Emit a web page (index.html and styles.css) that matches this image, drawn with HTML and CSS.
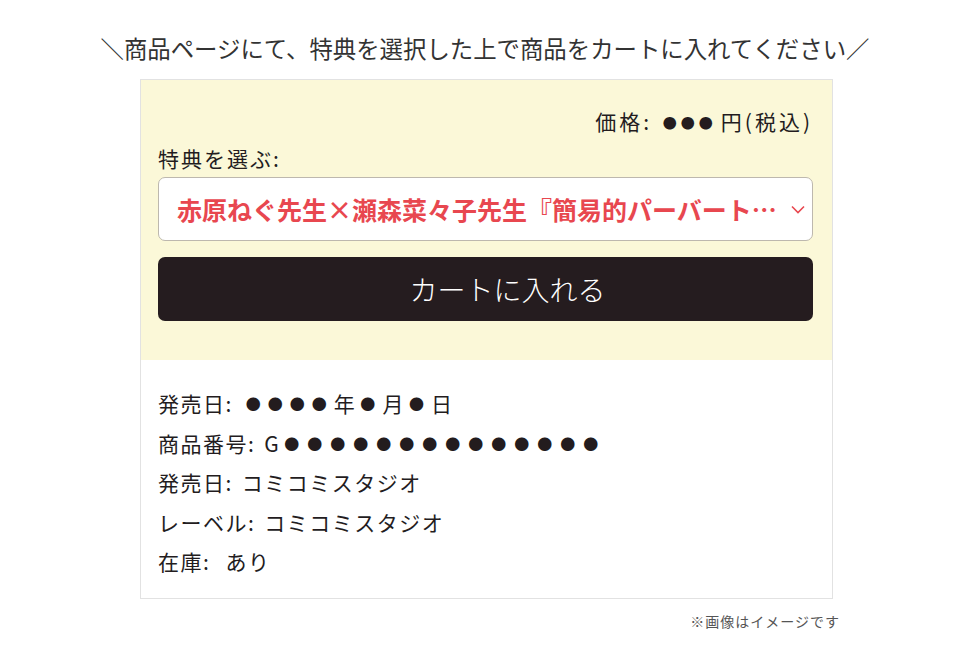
FILE: index.html
```html
<!DOCTYPE html>
<html lang="ja">
<head>
    <meta charset="UTF-8">
    <meta name="viewport" content="width=device-width, initial-scale=1.0">
    <title>カートに入れる</title>
    <link rel="stylesheet" href="styles.css">
</head>
<body>

<div class="page">
    <h2 class="lead">＼商品ページにて、特典を選択した上で商品をカートに入れてください／</h2>

    <div class="card">
        <!-- 購入エリア -->
        <div class="buy-box">
            <p class="price">価格: <span class="dots dots-small">●●●</span>円(税込)</p>
            <p class="label">特典を選ぶ:</p>
            <div class="select">
                <span class="select-text">赤原ねぐ先生×瀬森菜々子先生『簡易的パーバート…</span>
                <svg class="chevron" width="14" height="9" viewBox="0 0 14 9">
                    <path d="M1 1.5 L7 7.5 L13 1.5" fill="none" stroke="#e8474f" stroke-width="1.6"/>
                </svg>
            </div>
            <button class="cart-button">カートに入れる</button>
        </div>

        <!-- 商品情報 -->
        <ul class="info">
            <li><span class="key">発売日:</span><span class="dots">●●●●</span>年<span class="dots">●</span>月<span class="dots">●</span>日</li>
            <li><span class="key">商品番号:</span>G<span class="dots dots-wide">●●●●●●●●●●●●●●</span></li>
            <li><span class="key">発売日:</span>コミコミスタジオ</li>
            <li><span class="key">レーベル:</span>コミコミスタジオ</li>
            <li><span class="key">在庫:</span>&nbsp;あり</li>
        </ul>
    </div>

    <p class="note">※画像はイメージです</p>
</div>

</body>
</html>
```

FILE: styles.css
```css
body {
    margin: 0;
    background-color: #fff;
    font-family: "Noto Sans CJK JP", "Noto Sans", sans-serif;
    color: #231c1e;
}
.page {
    width: 970px;
    padding-top: 31px;
}
.lead {
    margin: 0 0 14px;
    font-size: 23.4px;
    font-weight: normal;
    line-height: 34px;
    text-align: center;
    color: #333;
}
.card {
    width: 691px;
    margin-left: 140px;
    border: 1px solid #e2e2e2;
    background-color: #fff;
}
.buy-box {
    background-color: #fbf8d8;
    padding: 26px 19px 39px 17px;
}
.price {
    margin: 0;
    font-size: 21px;
    letter-spacing: 3px;
    line-height: 30px;
    text-align: right;
}
.label {
    margin: 6px 0 4px;
    font-size: 21px;
    letter-spacing: 2px;
    line-height: 30px;
}
/* ●は小さめにして左右に間隔をとる */
.dots {
    font-size: 15px;
    letter-spacing: 7px;
    padding-left: 4px;
    vertical-align: 2px;
}
.dots-wide {
    letter-spacing: 8px;
}
.dots-small {
    font-size: 14px;
    letter-spacing: 4px;
    padding-left: 3px;
    margin-right: 4px;
}
.select {
    display: flex;
    align-items: center;
    justify-content: space-between;
    height: 62px;
    padding: 0 7px 0 18px;
    background-color: #fff;
    border: 1px solid #bdb8ae;
    border-radius: 7px;
}
.select-text {
    font-size: 25px;
    font-weight: bold;
    color: #e8474f;
    white-space: nowrap;
    overflow: hidden;
}
.chevron {
    flex-shrink: 0;
}
.cart-button {
    display: block;
    width: 100%;
    height: 64px;
    margin-top: 16px;
    padding-left: 50px;
    border: none;
    border-radius: 7px;
    background-color: #251c1f;
    color: #fff;
    font-family: inherit;
    font-size: 28px;
    font-weight: 300;
}
.info {
    list-style: none;
    margin: 0;
    padding: 24px 17px 16px;
}
.info li {
    font-size: 21px;
    letter-spacing: 1.5px;
    line-height: 39.5px;
}
.info .key {
    margin-right: 9px;
}
.note {
    width: 840px;
    margin: 12px 0 0;
    font-size: 14px;
    letter-spacing: 1px;
    text-align: right;
    color: #555;
}
```
